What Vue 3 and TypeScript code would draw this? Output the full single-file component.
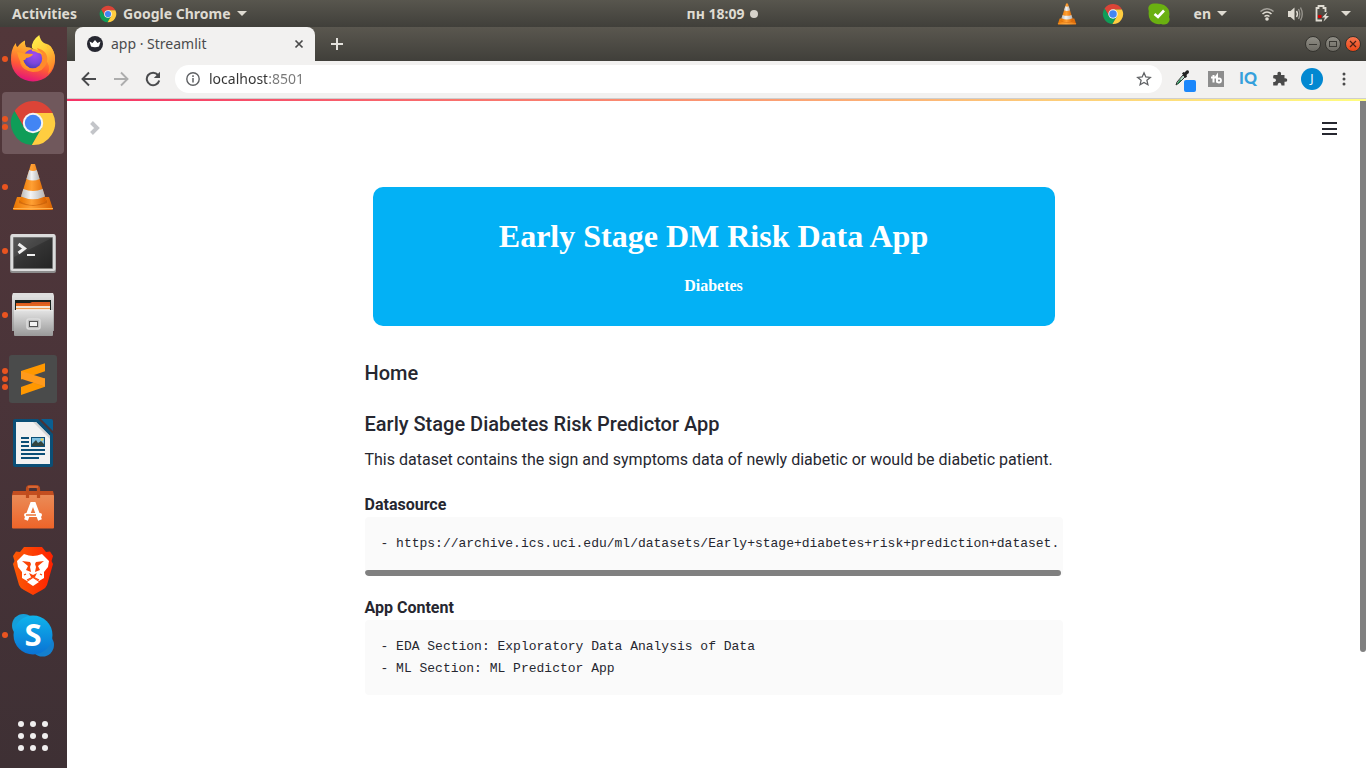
<script setup lang="ts">
import { ref } from 'vue'

interface DockItem {
  id: string
  label: string
  windows: number
  active?: boolean
}

const dock: DockItem[] = [
  { id: 'firefox', label: 'Firefox', windows: 1 },
  { id: 'chrome', label: 'Google Chrome', windows: 2, active: true },
  { id: 'vlc', label: 'VLC', windows: 1 },
  { id: 'terminal', label: 'Terminal', windows: 1 },
  { id: 'files', label: 'Files', windows: 1 },
  { id: 'sublime', label: 'Sublime Text', windows: 3 },
  { id: 'writer', label: 'Writer', windows: 0 },
  { id: 'software', label: 'Software', windows: 0 },
  { id: 'brave', label: 'Brave', windows: 0 },
  { id: 'skype', label: 'Skype', windows: 1 },
]

const gridDots = [4, 16, 28]
const address = ref('localhost:8501')
const sourceText = '- https://archive.ics.uci.edu/ml/datasets/Early+stage+diabetes+risk+prediction+dataset.'
const contentText = '- EDA Section: Exploratory Data Analysis of Data\n- ML Section: ML Predictor App'
</script>

<template>
  <div class="desktop">
    <svg class="defs" aria-hidden="true">
      <defs>
        <linearGradient id="ffBody" x1="0.7" y1="0" x2="0.4" y2="1">
          <stop offset="0" stop-color="#ffd83a" />
          <stop offset="0.35" stop-color="#ff9a2c" />
          <stop offset="0.65" stop-color="#ff5a36" />
          <stop offset="1" stop-color="#e3127c" />
        </linearGradient>
        <linearGradient id="ffFlame" x1="0" y1="0" x2="0.5" y2="1">
          <stop offset="0" stop-color="#fff44f" />
          <stop offset="0.5" stop-color="#ffd03a" />
          <stop offset="1" stop-color="#ff8a2a" />
        </linearGradient>
        <radialGradient id="ffGlobe" cx="0.6" cy="0.3" r="0.75">
          <stop offset="0" stop-color="#a24bf0" />
          <stop offset="0.6" stop-color="#7a46dc" />
          <stop offset="1" stop-color="#4a3ab8" />
        </radialGradient>
        <linearGradient id="vlcOrange" x1="0" y1="0" x2="1" y2="0">
          <stop offset="0" stop-color="#e87400" />
          <stop offset="0.45" stop-color="#ffa034" />
          <stop offset="1" stop-color="#d96200" />
        </linearGradient>
        <linearGradient id="vlcWhite" x1="0" y1="0" x2="1" y2="0">
          <stop offset="0" stop-color="#b9b9b9" />
          <stop offset="0.4" stop-color="#f4f4f4" />
          <stop offset="1" stop-color="#b4b4b4" />
        </linearGradient>
        <linearGradient id="termFace" x1="0" y1="0" x2="1" y2="1">
          <stop offset="0" stop-color="#4b4b4b" />
          <stop offset="0.5" stop-color="#333333" />
          <stop offset="1" stop-color="#242424" />
        </linearGradient>
        <linearGradient id="metal" x1="0" y1="0" x2="0" y2="1">
          <stop offset="0" stop-color="#e4e4e4" />
          <stop offset="1" stop-color="#999999" />
        </linearGradient>
        <linearGradient id="bag" x1="0" y1="0" x2="0" y2="1">
          <stop offset="0" stop-color="#ea8b57" />
          <stop offset="1" stop-color="#ee6429" />
        </linearGradient>
        <linearGradient id="braveFill" x1="0" y1="0" x2="1" y2="0">
          <stop offset="0" stop-color="#fb5a06" />
          <stop offset="1" stop-color="#ff2100" />
        </linearGradient>
        <linearGradient id="skypeFill" x1="0" y1="0" x2="0" y2="1">
          <stop offset="0" stop-color="#0fb4ec" />
          <stop offset="1" stop-color="#0a72d4" />
        </linearGradient>
        <symbol id="chromeLogo" viewBox="-24 -24 48 48">
          <path fill="#db4437" d="M0-10H19.6A22 22 0 0 0-18.45-12L-8.66 5Z" />
          <path fill="#0f9d58" d="M-18.45-12A22 22 0 0 0-1.15 22L8.66 5 0 0-8.66 5Z" />
          <path fill="#ffcd40" d="M-1.15 22A22 22 0 0 0 19.6-10H0L8.66 5Z" />
          <circle r="10.2" fill="#f5f5f5" />
          <circle r="8.2" fill="#4285f4" />
        </symbol>
        <symbol id="vlcLogo" viewBox="0 0 48 48">
          <path fill="url(#vlcOrange)" d="M8 34H40L44 46Q44 47 43 47H5Q4 47 4 46Z" />
          <path fill="#ffb04a" d="M4 45H44V46H4Z" />
          <path fill="#b95200" opacity=".5" d="M10 37Q24 47 38 37L38 40Q24 46 10 40Z" />
          <path fill="url(#vlcOrange)" d="M22 1H26L37 37Q36 41 24 41Q12 41 11 37Z" />
          <path fill="url(#vlcWhite)" d="M20.2 7Q24 9 27.8 7L30.6 16Q24 19 17.4 16Z" />
          <path fill="url(#vlcWhite)" d="M14.3 26Q24 30 33.7 26L36 33.500Q24 39 12 33.500Z" />
        </symbol>
      </defs>
    </svg>

    <header class="topbar">
      <div class="topbar-left">
        <button class="bar-button">Activities</button>
        <button class="bar-button">
          <svg width="18" height="18"><use href="#chromeLogo" /></svg>
          Google Chrome
          <svg width="10" height="6" viewBox="0 0 10 6"><path d="M0 0H10L5 5Z" fill="currentColor" /></svg>
        </button>
      </div>
      <button class="bar-button clock">пн 18:09 <span class="notice"></span></button>
      <div class="tray">
        <svg width="22" height="22"><use href="#vlcLogo" /></svg>
        <svg width="22" height="22"><use href="#chromeLogo" /></svg>
        <svg width="22" height="22" viewBox="0 0 22 22">
          <path fill="#6ab011" d="M7 0.500Q2 0 .5 4Q0 6 .8 8Q-.5 18 7 20.500Q10 21.500 13 21Q19 23 21.300 18Q22 16 21 14Q23 6 16 2Q12 0 7 .5Z" />
          <path d="M6.500 11 10 14 16 7.500" fill="none" stroke="#fff" stroke-width="2.600" />
        </svg>
        <button class="bar-button">
          en
          <svg width="10" height="6" viewBox="0 0 10 6"><path d="M0 0H10L5 5Z" fill="currentColor" /></svg>
        </button>
        <button class="bar-button system" aria-label="System menu">
          <svg width="16" height="16" viewBox="0 0 16 16" fill="none">
            <path d="M1.500 5.500Q8 0 14.500 5.500" stroke="#a5a29b" stroke-width="1.500" />
            <path d="M3.500 8Q8 4 12.500 8M5.500 10.500Q8 8.500 10.500 10.500" stroke="#dfdbd2" stroke-width="1.600" />
            <circle cx="8" cy="13" r="1.800" fill="#dfdbd2" />
          </svg>
          <svg width="16" height="16" viewBox="0 0 16 16" fill="none">
            <path d="M1 5H3.500L7.500 1.500V14.500L3.500 11H1Z" fill="#dfdbd2" />
            <path d="M9.500 5Q11.500 8 9.500 11" stroke="#dfdbd2" stroke-width="1.400" />
            <path d="M11.500 3Q14 8 11.500 13M13.500 1.500Q17 8 13.500 14.500" stroke="#97948d" stroke-width="1.400" />
          </svg>
          <svg width="14" height="17" viewBox="0 0 14 17">
            <path d="M7 15.500H1.500V3H3.500V1H8.500V3H10.500V7" fill="none" stroke="#dfdbd2" stroke-width="1.800" />
            <path d="M3 10H6.500V13H3Z" fill="#d40000" />
            <path d="M12.500 7 7 12.500H10L8.500 16.500 14 11H11Z" fill="#dfdbd2" />
          </svg>
          <svg width="10" height="6" viewBox="0 0 10 6"><path d="M0 0H10L5 5Z" fill="currentColor" /></svg>
        </button>
      </div>
    </header>

    <div class="workspace">
      <nav class="dock" aria-label="Dock">
        <button
          v-for="item in dock"
          :key="item.id"
          class="dock-item"
          :class="{ active: item.active }"
          :aria-label="item.label"
        >
          <span class="dots"><i v-for="n in item.windows" :key="n"></i></span>
          <svg width="48" height="48" viewBox="0 0 48 48">
            <g v-if="item.id === 'firefox'">
              <path fill="url(#ffBody)" d="M6.700 8Q7 11 8.500 12Q12 7 16 5.500Q15.500 10 17 12Q21 12 24 14L34 8Q41 9 42.700 13Q46 18 46 25A22 21.500 0 0 1 2 25Q1.500 15 6.700 8Z" />
              <path fill="url(#ffFlame)" d="M30.300 0Q31 5 35 8Q38 10 38.500 13L41.500 11.500Q46 17 46 24Q45 33 39 39Q42 30 36 24Q30 17 23 13Q22 6 30.300 0Z" />
              <path fill="#ff8b2b" d="M28 13Q40 16 38 27Q35 37 24 37Q14 36 11 28L15 20 30 17Z" />
              <circle cx="23.700" cy="23.700" r="9.500" fill="url(#ffGlobe)" />
              <path fill="#ffb02e" d="M23 14Q31 14 34 20Q32 18 29 18Q26 16 23 16Z" />
              <path fill="#ff9d28" d="M8 17Q12 17 16 18.500L24 19Q23 22 17 23Q17 25 14 25Q16 31 22 34Q14 33 11 26Q9 22 8 17Z" />
            </g>
            <use v-else-if="item.id === 'chrome'" href="#chromeLogo" />
            <use v-else-if="item.id === 'vlc'" href="#vlcLogo" />
            <g v-else-if="item.id === 'terminal'">
              <rect x="1" y="8" width="46" height="38" rx="2" fill="#8d8d8d" />
              <rect x="1.500" y="7" width="45" height="37" rx="2" fill="#dcdcdc" />
              <rect x="4" y="10" width="40" height="32" rx="1" fill="#777" />
              <rect x="5" y="11" width="38" height="30" fill="url(#termFace)" />
              <path d="M5 11H43L5 30Z" fill="#fff" opacity=".07" />
              <path d="M9.500 17 15.500 21.500 9.500 26" fill="none" stroke="#f0f0f0" stroke-width="3" />
              <path d="M18 28H26" stroke="#f0f0f0" stroke-width="2" />
            </g>
            <g v-else-if="item.id === 'files'">
              <path fill="url(#metal)" d="M4 2H44L45 6V40H3V6Z" />
              <path fill="#dedede" d="M4 2H44L45 6H3Z" />
              <rect x="6" y="9" width="36" height="12" fill="#17211c" />
              <path d="M7 14V12H21L23 11H41V14Z" fill="#d95a21" />
              <rect x="7" y="14" width="34" height="6" fill="#f4e5d5" />
              <path d="M7 14H41" stroke="#e2661d" stroke-width="2" />
              <path d="M7 17.500H41" stroke="#ef9a4e" />
              <rect x="5" y="19" width="39" height="26" rx="1" fill="url(#metal)" />
              <path d="M5 19.500H44" stroke="#e9e9e9" />
              <rect x="18" y="28" width="13" height="10" rx="2" fill="#bfbfbf" stroke="#ddd" stroke-width="1.500" />
              <rect x="20.500" y="30.500" width="8" height="5" fill="#f4f4f4" stroke="#555" />
            </g>
            <g v-else-if="item.id === 'sublime'">
              <rect width="48" height="48" rx="3" fill="#4a4b4b" />
              <path fill="#ff9800" d="M12 16 36 8.300V16.300L12 24.500ZM12 32 36 23.500V31.700L12 40Z" />
              <path fill="#e58a14" d="M36 23.500 24 27.700 36 31.700Z" />
              <path fill="#ff9a1c" d="M12 16 36 23.500V31.500L12 23.800Z" />
            </g>
            <g v-else-if="item.id === 'writer'">
              <path fill="#0b4f77" d="M6 0H29L44 15V46Q44 48 42 48H6Q4 48 4 46V2Q4 0 6 0Z" />
              <path fill="#0b5f91" d="M32 0H42Q44 0 44 2V12Z" />
              <path fill="#f2f2f2" d="M7 3H27L41 17V45H7Z" />
              <path fill="#d4d4d4" d="M27 3 41 17V20L24 3Z" />
              <path stroke="#0b4f77" stroke-width="2" d="M12 19H20M12 23H20M12 27H20M12 31H36M12 35H36M12 39H30" />
              <rect x="22.500" y="18.500" width="13" height="9" fill="#80c0e0" stroke="#0b4f77" />
              <path fill="#33443f" d="M23 27V25L27 21 29 24 32 22 35 25V27Z" />
              <circle cx="33" cy="20.500" r="1.200" fill="#f2cf4a" />
            </g>
            <g v-else-if="item.id === 'software'">
              <path fill="#c34e20" d="M4 8H44L45 12V15H3V12Z" />
              <rect x="3" y="12" width="42" height="33.500" rx="1" fill="url(#bag)" />
              <path d="M18.500 15V6Q18.500 3.500 21 3.500H27Q29.500 3.500 29.500 6V15" fill="none" stroke="#bf4c1d" stroke-width="3.200" />
              <path d="M19 4 29 4" stroke="#e98051" />
              <path d="M17 37 23 21H25L31 37" fill="none" stroke="#fff" stroke-width="4" />
              <rect x="15" y="30" width="18" height="4" rx="2" fill="#fff" />
              <path d="M17 32H27" stroke="#ee7f45" stroke-width="1.600" />
            </g>
            <g v-else-if="item.id === 'brave'">
              <path fill="url(#braveFill)" d="M15 0H33L37 5 41 4.500 44 9 42.500 14 44 17 38 38Q37 41 33 43L24 48 15 43Q11 41 10 38L4 17 5.500 14 4 9 7 4.500 11 5Z" />
              <path fill="#fff" d="M15 7Q20 9 24 9Q28 9 33 7L40 14 39 20 35 25 35 31 30 34 24 30 18 34 13 31 13 25 9 20 8 14Z" />
              <path fill="#fb4306" d="M13 14 21 15 22 17 21 20 22 25 17 23 19 19ZM35 14 27 15 26 17 27 20 26 25 31 23 29 19Z" />
              <path fill="#fb4306" d="M20 26 24 28 28 26 26 30 24 31 22 30Z" />
              <path fill="#fff" d="M24 31 30 35 24 39 18 35Z" />
              <path stroke="#fb4306" stroke-width="1.200" d="M15 28 17 27M33 28 31 27M18 33 23 30.500M30 33 25 30.500" />
            </g>
            <g v-else>
              <circle cx="14.500" cy="14.500" r="11.500" fill="#159fda" />
              <circle cx="33.500" cy="34" r="11.500" fill="#147fcd" />
              <circle cx="24" cy="24" r="19.500" fill="url(#skypeFill)" />
              <text x="24" y="35" text-anchor="middle" class="skype-letter">S</text>
            </g>
          </svg>
        </button>
        <button class="apps" aria-label="Show applications">
          <svg width="32" height="32" viewBox="0 0 32 32">
            <template v-for="y in gridDots" :key="y">
              <circle v-for="x in gridDots" :key="x" :cx="x" :cy="y" r="3" fill="#f0eeee" />
            </template>
          </svg>
        </button>
      </nav>

      <section class="browser">
        <div class="tabstrip">
          <div class="tab">
            <svg width="16" height="16" viewBox="0 0 16 16">
              <circle cx="8" cy="8" r="8" fill="#262730" />
              <path fill="#fff" d="M2.500 5.500 5.500 7 8 4 10.500 7 13.500 5.500 12 10.500Q8 12 4 10.500Z" />
            </svg>
            <span class="tab-title">app · Streamlit</span>
            <button class="icon-button" aria-label="Close tab">
              <svg width="10" height="10" viewBox="0 0 10 10"><path d="M1.500 1.500 8.500 8.500M8.500 1.500 1.500 8.500" stroke="#4a4a4a" stroke-width="1.700" /></svg>
            </button>
          </div>
          <button class="icon-button new-tab" aria-label="New tab">
            <svg width="14" height="14" viewBox="0 0 14 14"><path d="M7 1V13M1 7H13" stroke="#e4e2dd" stroke-width="2" /></svg>
          </button>
          <div class="controls">
            <button class="control" aria-label="Minimize">
              <svg width="10" height="10" viewBox="0 0 10 10"><path d="M1 5.500H9" stroke="#3a3934" /></svg>
            </button>
            <button class="control" aria-label="Maximize">
              <svg width="10" height="10" viewBox="0 0 10 10"><rect x="1.500" y="2.500" width="7" height="5" fill="none" stroke="#3a3934" /></svg>
            </button>
            <button class="control close" aria-label="Close">
              <svg width="10" height="10" viewBox="0 0 10 10"><path d="M2 2 8 8M8 2 2 8" stroke="#4a2015" stroke-width="1.200" /></svg>
            </button>
          </div>
        </div>

        <div class="toolbar">
          <button class="tool" aria-label="Back">
            <svg width="16" height="16" viewBox="0 0 16 16" fill="none"><path d="M15 8H2M8 1.500 1.500 8 8 14.500" stroke="#4a4b4d" stroke-width="1.900" /></svg>
          </button>
          <button class="tool" aria-label="Forward">
            <svg width="16" height="16" viewBox="0 0 16 16" fill="none"><path d="M1 8H14M8 1.500 14.500 8 8 14.500" stroke="#adadad" stroke-width="1.900" /></svg>
          </button>
          <button class="tool" aria-label="Reload">
            <svg width="16" height="16" viewBox="0 0 16 16" fill="none">
              <path d="M13 4A6.300 6.300 0 1 0 14.200 9.500" stroke="#4a4b4d" stroke-width="2" />
              <path d="M15 .8V7H8.800Z" fill="#4a4b4d" />
            </svg>
          </button>
          <div class="omnibox">
            <svg width="14" height="14" viewBox="0 0 14 14" fill="none">
              <circle cx="7" cy="7" r="6.200" stroke="#5f6164" stroke-width="1.400" />
              <path d="M7 6V10.500M7 3.300V5" stroke="#5f6164" stroke-width="1.500" />
            </svg>
            <input v-model="address" type="text" aria-label="Address" />
            <button class="icon-button" aria-label="Bookmark">
              <svg width="16" height="16" viewBox="0 0 16 16"><path d="M8 1.800 9.800 6 14.300 6.400 10.900 9.300 11.900 13.700 8 11.400 4.100 13.700 5.100 9.300 1.700 6.400 6.200 6Z" fill="none" stroke="#5f6164" stroke-width="1.300" /></svg>
            </button>
          </div>
          <button class="tool" aria-label="Color picker">
            <svg width="24" height="28" viewBox="0 0 24 28">
              <path d="M4 20 5 17 11 10 13 12 7 18Z" fill="#b8d8c8" stroke="#333" />
              <path d="M4.500 19.500 8 14.500 9.500 15 6.500 18.500Z" fill="#18864b" />
              <path d="M10 8.500 11.500 7 12.500 7.500 14.500 5.500Q17 4.500 17 7Q17 8.500 15.500 9L14.500 10 15 11.500 13.500 13Z" fill="#222" />
              <rect x="12" y="15" width="12" height="12" rx="2" fill="#1b87fb" />
            </svg>
          </button>
          <button class="tool" aria-label="TubeBuddy">
            <svg width="16" height="16" viewBox="0 0 16 16">
              <rect width="16" height="16" fill="#8d8d8d" />
              <path d="M5.500 4V11.500M3 6.500H7.500L9 4.500V11.500" fill="none" stroke="#fff" stroke-width="2" />
              <circle cx="11" cy="9.500" r="2" fill="none" stroke="#fff" stroke-width="1.800" />
            </svg>
          </button>
          <button class="tool iq">IQ</button>
          <button class="tool" aria-label="Extensions">
            <svg width="16" height="16" viewBox="0 0 16 16"><path fill="#4a4a4a" d="M2.500 4H5.500Q5 .8 7.200 .8Q9.500 .8 9 4H12.500V7.200Q15.300 6.800 15.300 9Q15.300 11.200 12.500 10.800V14.500H9.500Q9.500 11.800 7.500 11.800Q5.500 11.800 5.500 14.500H1.200V11Q4 11 4 9Q4 7.200 1.200 7.200V5.200Q1.200 4 2.500 4Z" /></svg>
          </button>
          <button class="tool" aria-label="Profile"><span class="avatar">J</span></button>
          <button class="tool" aria-label="Menu">
            <svg width="4" height="14" viewBox="0 0 4 14" fill="#4a4a4a"><circle cx="2" cy="2" r="1.500" /><circle cx="2" cy="7" r="1.500" /><circle cx="2" cy="12" r="1.500" /></svg>
          </button>
        </div>

        <div class="decoration"></div>

        <div class="viewport">
          <div class="page">
            <div class="page-header">
              <button class="icon-button" aria-label="Open sidebar">
                <svg width="12" height="14" viewBox="0 0 12 14"><path d="M2.500 1.500 8 7 2.500 12.500" fill="none" stroke="#c3c5c9" stroke-width="4" /></svg>
              </button>
              <button class="icon-button" aria-label="Main menu">
                <svg width="16" height="14" viewBox="0 0 16 14"><path d="M1 2H16M1 8H16M1 13H16" stroke="#262730" stroke-width="2" /></svg>
              </button>
            </div>
            <main class="content">
              <div class="banner">
                <h1>Early Stage DM Risk Data App</h1>
                <h4>Diabetes</h4>
              </div>
              <h3 class="first">Home</h3>
              <h3>Early Stage Diabetes Risk Predictor App</h3>
              <p>This dataset contains the sign and symptoms data of newly diabetic or would be diabetic patient.</p>
              <h5>Datasource</h5>
              <div class="code-block">
                <pre><code>{{ sourceText }}</code></pre>
                <div class="hscroll"></div>
              </div>
              <h5>App Content</h5>
              <div class="code-block">
                <pre><code>{{ contentText }}</code></pre>
              </div>
            </main>
          </div>
          <div class="vscroll"><div class="thumb"></div></div>
        </div>
      </section>
    </div>
  </div>
</template>

<style>
body {
  margin: 0;
}
</style>

<style scoped>
.desktop {
  display: flex;
  flex-direction: column;
  min-height: 100vh;
  font-family: 'Noto Sans', 'Open Sans', sans-serif;
  background: #45433e;
}

.defs {
  position: absolute;
  width: 0;
  height: 0;
}

svg {
  display: block;
  flex: none;
}

button {
  margin: 0;
  padding: 0;
  border: 0;
  background: none;
  font: inherit;
  color: inherit;
}

.topbar {
  display: grid;
  grid-template-columns: 1fr auto 1fr;
  align-items: center;
  height: 27px;
  padding: 0 15px 0 12px;
  background: linear-gradient(#58564e, #403f3a);
  color: #dfdbd2;
  font-size: 14px;
  font-weight: 700;
}

.topbar-left,
.bar-button,
.tray {
  display: flex;
  align-items: center;
}

.topbar-left {
  gap: 22px;
}

.bar-button {
  gap: 6px;
  line-height: 26px;
}

.clock {
  padding-left: 82px;
}

.notice {
  width: 8px;
  height: 8px;
  border-radius: 50%;
  background: #d6d2ca;
}

.tray {
  justify-content: flex-end;
  gap: 24px;
}

.system {
  gap: 12px;
  margin-left: 8px;
}

.workspace {
  display: flex;
  flex: 1;
}

.dock {
  display: flex;
  flex-direction: column;
  gap: 2px;
  flex: none;
  box-sizing: border-box;
  width: 67px;
  padding: 1px 3px 16px 2px;
  background: linear-gradient(#52373a, #4a3439 50%, #3e3034);
}

.dock-item {
  display: flex;
  align-items: center;
  height: 62px;
  border-radius: 4px;
}

.dock-item.active {
  background: #70585c;
}

.dots {
  display: flex;
  flex-direction: column;
  gap: 2px;
  width: 7px;
}

.dots i {
  width: 6px;
  height: 6px;
  border-radius: 50%;
  background: #e95420;
}

.skype-letter {
  font: 700 31px 'Open Sans', sans-serif;
  fill: #fff;
}

.apps {
  display: flex;
  justify-content: center;
  margin-top: auto;
}

.browser {
  display: flex;
  flex-direction: column;
  flex: 1;
  min-width: 0;
  background: #fff;
}

.tabstrip {
  display: flex;
  align-items: center;
  height: 34px;
  padding: 0 5px 0 8px;
  background: linear-gradient(#5a574f, #403f3a);
}

.tab {
  display: flex;
  align-items: center;
  gap: 8px;
  box-sizing: border-box;
  width: 240px;
  height: 34px;
  padding: 0 11px 0 12px;
  border-radius: 8px 8px 0 0;
  background: #f2f1f0;
  color: #4a4b4d;
  font-size: 14px;
}

.tab-title {
  flex: 1;
  padding-bottom: 2px;
}

.icon-button {
  display: flex;
  align-items: center;
  justify-content: center;
}

.new-tab {
  margin-left: 15px;
}

.controls {
  display: flex;
  gap: 4px;
  margin-left: auto;
}

.control {
  display: flex;
  align-items: center;
  justify-content: center;
  box-sizing: border-box;
  width: 16px;
  height: 16px;
  border: 1px solid #35342f;
  border-radius: 50%;
  background: linear-gradient(#908e86, #6d6b64);
}

.control.close {
  background: linear-gradient(#f7764f, #ec4717);
}

.toolbar {
  display: flex;
  align-items: center;
  height: 36px;
  padding: 0 6px 1px;
  border-bottom: 1px solid #cfcecd;
  background: #f2f1f0;
}

.tool {
  display: flex;
  align-items: center;
  justify-content: center;
  width: 32px;
  height: 28px;
}

.iq {
  color: #35a0dc;
  font: 900 16px/26px Lato, sans-serif;
  align-items: flex-start;
}

.avatar {
  width: 22px;
  border-radius: 50%;
  background: #0288d1;
  color: #fff;
  font-size: 12px;
  line-height: 22px;
  text-align: center;
}

.omnibox {
  display: flex;
  flex: 1;
  align-items: center;
  gap: 9px;
  height: 28px;
  margin: 0 6px;
  padding: 0 10px 0 11px;
  border-radius: 14px;
  background: #fff;
}

.omnibox input {
  flex: 1;
  min-width: 0;
  padding: 0 0 2px;
  border: 0;
  outline: 0;
  background: linear-gradient(90deg, #333 58px, #777 58px);
  background-clip: text;
  color: transparent;
  font: 14px 'Noto Sans', sans-serif;
}

.decoration {
  height: 2px;
  background: linear-gradient(90deg, #f63366, #fffd80);
}

.viewport {
  display: flex;
  flex: 1;
}

.page {
  flex: 1;
  min-width: 0;
}

.page-header {
  display: flex;
  align-items: center;
  justify-content: space-between;
  height: 54px;
  padding: 0 23px 0 22px;
}

.content {
  max-width: 698px;
  margin: 0 auto;
  padding: 32px 16px 40px;
  color: #262730;
  font-family: Roboto, sans-serif;
}

.banner {
  margin: 0 8px 33px;
  padding: 31px 10px;
  border-radius: 10px;
  background: #03b1f5;
  color: #fff;
  font-family: 'Liberation Serif', serif;
  text-align: center;
}

.banner h1 {
  margin: 0 0 22px;
  font-size: 32px;
  line-height: 37px;
}

.banner h4 {
  margin: 0;
  font-size: 16px;
  line-height: 18px;
}

h3 {
  margin: 23px 0 8px;
  font-size: 20px;
  font-weight: 500;
  line-height: 28px;
}

.first {
  margin: 0;
}

p {
  margin: 0 0 20px;
  padding-top: 1px;
  font-size: 16px;
  line-height: 26px;
}

h5 {
  margin: 20px 0 0;
  font-size: 16px;
  font-weight: 700;
  line-height: 24px;
}

p + h5 {
  margin-top: 0;
}

.code-block {
  overflow: hidden;
  border-radius: 4px;
  background: #fafafa;
}

pre {
  margin: 0;
  padding: 16px 16px 15px;
}

code {
  font-family: 'Liberation Mono', monospace;
  font-size: 13px;
  line-height: 22px;
}

.hscroll {
  height: 6px;
  margin-right: 2px;
  border-radius: 3px;
  background: #808080;
}

.vscroll {
  width: 6px;
}

.thumb {
  height: 551px;
  border-radius: 0 0 3px 3px;
  background: #808080;
}
</style>
